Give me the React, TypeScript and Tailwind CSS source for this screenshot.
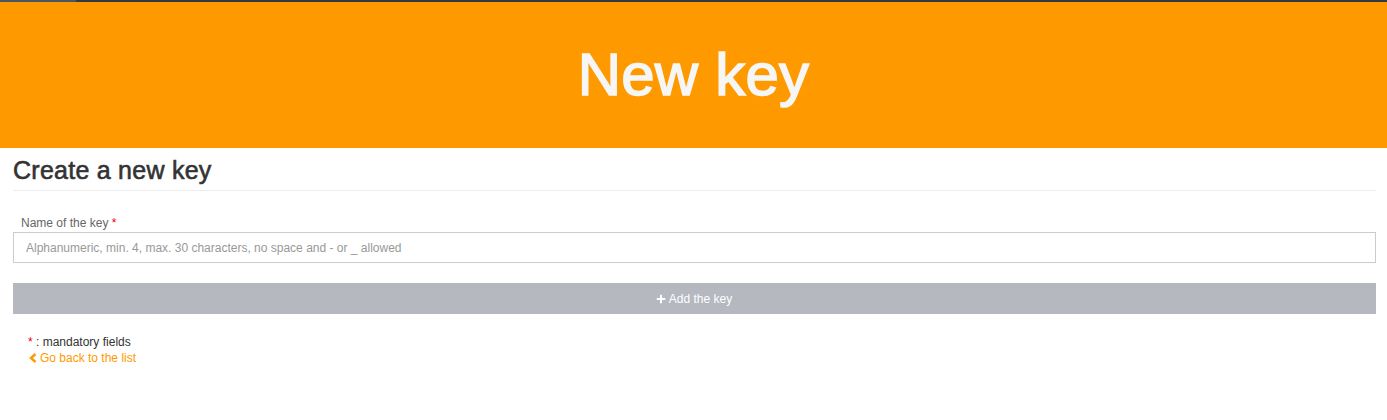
import { Plus } from "lucide-react";

export default function App() {
  return (
    <div className="min-h-[420px] bg-white font-['Liberation_Sans',Arial,sans-serif] text-[#333]">
      {/* top strip */}
      <div className="flex h-[2px] bg-[#343a40]">
        <div className="w-[76px] bg-[#4b5563]" />
      </div>

      {/* orange banner */}
      <header className="flex h-[146px] items-center justify-center bg-[#ff9900]">
        <h1 className="text-[60px] leading-none tracking-[0.2px] text-[#f6f6f6] [-webkit-text-stroke:1.5px_#f6f6f6]">
          New key
        </h1>
      </header>

      <main className="pl-[13px] pr-[11px]">
        <h2 className="border-b border-[#eee] pb-[6px] pt-[8px] text-[25px] leading-[28px] tracking-[0.25px] [-webkit-text-stroke:0.6px_#333]">
          Create a new key
        </h2>

        <form className="pt-[25px]">
          <label className="block pl-[8px] text-[12px] leading-[14px] text-[#666]">
            Name of the key <span className="text-[#e00]">*</span>
          </label>
          <input
            type="text"
            placeholder="Alphanumeric, min. 4, max. 30 characters, no space and - or _ allowed"
            className="mt-[2px] block h-[31px] w-full border border-[#ccc] px-[12px] text-[12px] placeholder:text-[#999] outline-none"
          />
          <button
            type="button"
            className="mt-[20px] flex h-[31px] w-full items-center justify-center gap-[2px] bg-[#b5b8bf] text-[12px] text-white"
          >
            <Plus size={12} strokeWidth={4} className="-ml-[2px]" />
            Add the key
          </button>
        </form>

        <div className="pl-[15px] pt-[20px] text-[12px] leading-[16px]">
          <p>
            <span className="text-[#e00]">*</span> : mandatory fields
          </p>
          <a href="#" className="flex items-center gap-[3px] text-[#ff9900]">
            <svg width="8" height="10" viewBox="0 0 8 10" className="ml-[1px]">
              <polyline points="6.5,1 2,5 6.5,9" fill="none" stroke="#ff9900" strokeWidth="2.4" />
            </svg>
            Go back to the list
          </a>
        </div>
      </main>
    </div>
  );
}
